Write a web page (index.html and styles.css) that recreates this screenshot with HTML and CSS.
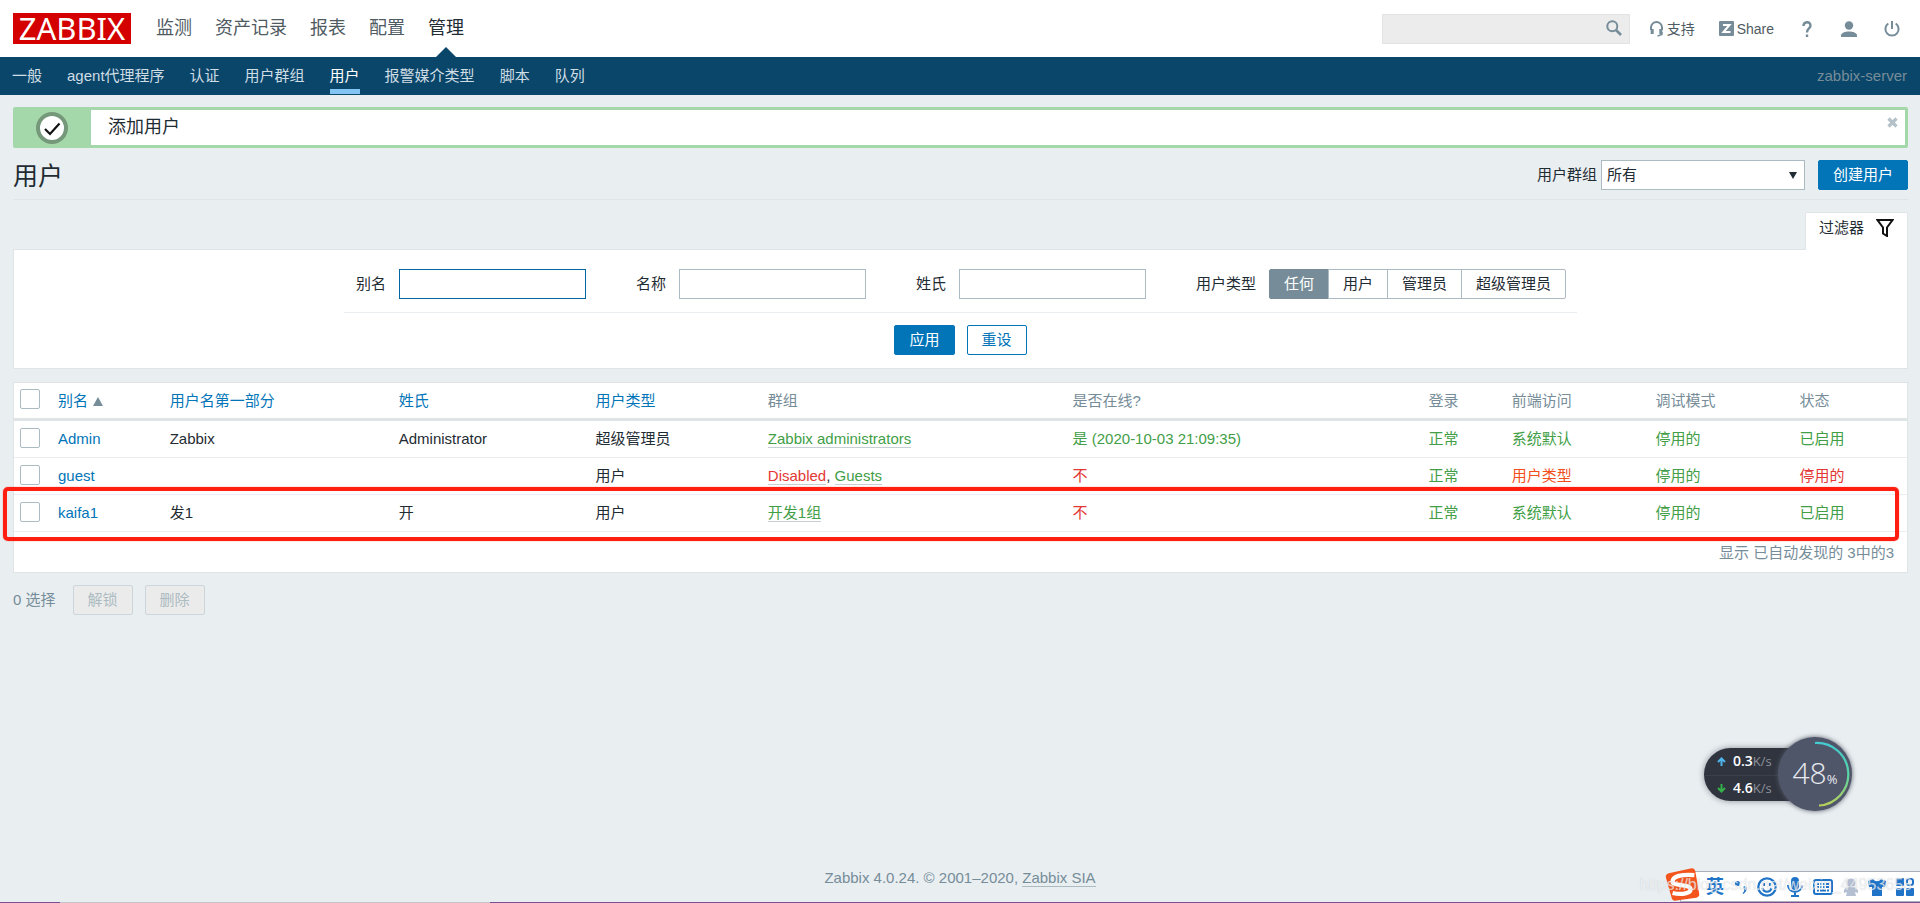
FILE: index.html
```html
<!DOCTYPE html>
<html lang="zh-CN">
<head>
<meta charset="utf-8">
<title>用户</title>
<link rel="stylesheet" href="styles.css">
</head>
<body>
<header class="top">
  <a class="logo" href="#">ZABBIX</a>
  <nav class="main-nav">
    <a href="#">监测</a><a href="#">资产记录</a><a href="#">报表</a><a href="#">配置</a><a class="active" href="#">管理</a>
  </nav>
  <form class="search">
    <input type="text" aria-label="搜索">
    <button type="button" aria-label="搜索"><svg width="16" height="16" viewBox="0 0 16 16" fill="none" stroke="#768d99" stroke-width="2"><circle cx="6.3" cy="6.3" r="5"/><path d="M10 10l5 5" stroke-width="2.6"/></svg></button>
  </form>
  <div class="tools">
    <a class="support" href="#"><svg width="15" height="16" viewBox="0 0 15 16" fill="none" stroke="#768d99" stroke-width="2"><path d="M2 9V6.5a5.5 5.5 0 0 1 11 0V9"/><path d="M3.200 8v5M11.800 8v5" stroke-width="3"/><path d="M13 11v2.500L8.500 15" stroke-width="1.400"/></svg>支持</a>
    <a class="share" href="#"><svg width="15" height="15" viewBox="0 0 15 15"><rect width="15" height="15" rx="1" fill="#768d99"/><path d="M4 4h6.500L4.500 11H11.500" fill="none" stroke="#fff" stroke-width="2"/></svg>Share</a>
    <a class="help" href="#" aria-label="帮助"><svg width="10" height="16" viewBox="0 0 10 16" fill="none" stroke="#768d99" stroke-width="2.400"><path d="M1.500 5C1.500 0 8.500 0 8.500 4.500 8.500 7.500 5 7.500 5 11.500M5 13.500V16"/></svg></a>
    <a class="profile" href="#" aria-label="用户资料"><svg width="16" height="16" viewBox="0 0 16 16" fill="#768d99"><circle cx="8" cy="4.500" r="4.200"/><path d="M0 16v-1.500C0 12 4 10.500 8 10.500s8 1.500 8 4V16z"/></svg></a>
    <a class="signout" href="#" aria-label="退出"><svg width="16" height="16" viewBox="0 0 16 16" fill="none" stroke="#768d99" stroke-width="2"><path d="M4.300 2.500a6.600 6.600 0 1 0 7.400 0M8 0v8"/></svg></a>
  </div>
</header>
<nav class="sub-nav">
  <a href="#">一般</a><a href="#">agent代理程序</a><a href="#">认证</a><a href="#">用户群组</a><a class="active" href="#">用户</a><a href="#">报警媒介类型</a><a href="#">脚本</a><a href="#">队列</a>
  <span class="server">zabbix-server</span>
</nav>
<main>
  <section class="message">
    <div class="message-icon"><svg width="32" height="32" viewBox="0 0 32 32"><circle cx="16" cy="16" r="14" fill="#fff" stroke="#76987a" stroke-width="4"/><path d="M9 17l5 5L23.500 11.500" fill="none" stroke="#111" stroke-width="2.200"/></svg></div>
    <p>添加用户</p>
    <button type="button" aria-label="关闭"><svg width="11" height="11" viewBox="0 0 11 11"><path d="M1.500 1.500l8 8M9.500 1.500l-8 8" stroke="#b5c1c8" stroke-width="3.200"/></svg></button>
  </section>
  <div class="title-row">
    <h1>用户</h1>
    <label for="group">用户群组</label>
    <div class="select-wrap"><select id="group"><option>所有</option></select></div>
    <button type="button" class="btn">创建用户</button>
  </div>
  <div class="tab-row">
    <button type="button" class="filter-tab">过滤器<svg width="18" height="18" viewBox="0 0 18 18" fill="none" stroke="#111" stroke-width="2"><path d="M1.500 1h15L11 8.500V17l-4-2.500v-6z"/></svg></button>
  </div>
  <form class="filter">
    <div class="fields">
      <label for="alias">别名</label><input class="text current" id="alias" type="text">
      <label for="name">名称</label><input class="text" id="name" type="text">
      <label for="surname">姓氏</label><input class="text" id="surname" type="text">
      <span class="type-label" id="type-label">用户类型</span>
      <div class="segments" role="radiogroup" aria-labelledby="type-label">
        <label><input type="radio" name="type" checked>任何</label>
        <label><input type="radio" name="type">用户</label>
        <label><input type="radio" name="type">管理员</label>
        <label><input type="radio" name="type">超级管理员</label>
      </div>
    </div>
    <div class="actions"><button type="button" class="btn">应用</button><button type="button" class="btn alt">重设</button></div>
  </form>
  <div class="list">
    <table>
      <colgroup><col class="c-check"><col class="c-alias"><col class="c-name"><col class="c-surname"><col class="c-type"><col class="c-groups"><col class="c-online"><col class="c-login"><col class="c-front"><col class="c-debug"><col></colgroup>
      <thead>
        <tr><th><input type="checkbox" aria-label="全选"></th><th><a href="#">别名<i class="sort"></i></a></th><th><a href="#">用户名第一部分</a></th><th><a href="#">姓氏</a></th><th><a href="#">用户类型</a></th><th>群组</th><th>是否在线?</th><th>登录</th><th>前端访问</th><th>调试模式</th><th>状态</th></tr>
      </thead>
      <tbody>
        <tr><td><input type="checkbox" aria-label="Admin"></td><td><a href="#">Admin</a></td><td>Zabbix</td><td>Administrator</td><td>超级管理员</td><td><a class="dot green" href="#">Zabbix administrators</a></td><td class="green">是 (2020-10-03 21:09:35)</td><td class="green">正常</td><td class="green">系统默认</td><td class="green">停用的</td><td class="green">已启用</td></tr>
        <tr><td><input type="checkbox" aria-label="guest"></td><td><a href="#">guest</a></td><td></td><td></td><td>用户</td><td><a class="dot red" href="#">Disabled</a>, <a class="dot green" href="#">Guests</a></td><td class="red">不</td><td class="green">正常</td><td class="orange">用户类型</td><td class="green">停用的</td><td class="red">停用的</td></tr>
        <tr><td><input type="checkbox" aria-label="kaifa1"></td><td><a href="#">kaifa1</a></td><td>发1</td><td>开</td><td>用户</td><td><a class="dot green" href="#">开发1组</a></td><td class="red">不</td><td class="green">正常</td><td class="green">系统默认</td><td class="green">停用的</td><td class="green">已启用</td></tr>
      </tbody>
    </table>
    <p class="total">显示 已自动发现的 3中的3</p>
    <div class="highlight"></div>
  </div>
  <div class="bulk"><span>0 选择</span><button type="button" class="btn" disabled>解锁</button><button type="button" class="btn" disabled>删除</button></div>
</main>
<footer>Zabbix 4.0.24. © 2001–2020, <a href="#">Zabbix SIA</a></footer>

<aside class="meter">
  <div class="rates">
    <div><svg width="9" height="9" viewBox="0 0 9 9" fill="none" stroke="#4fb4ec" stroke-width="2"><path d="M4.500 9V1.500M1 5l3.500-3.500L8 5"/></svg><b>0.3</b><span>K/s</span></div>
    <div><svg width="9" height="9" viewBox="0 0 9 9" fill="none" stroke="#35b04a" stroke-width="2"><path d="M4.500 0v7.500M1 4l3.500 3.500L8 4"/></svg><b>4.6</b><span>K/s</span></div>
  </div>
  <div class="dial">
    <svg width="74" height="74" viewBox="0 0 74 74"><defs><linearGradient id="arc" x1="0" y1="0" x2="0" y2="1"><stop offset="0" stop-color="#43cbd0"/><stop offset=".5" stop-color="#57d6a6"/><stop offset="1" stop-color="#b9cf5a"/></linearGradient></defs><path d="M37 6a31 31 0 0 1 4 62.500" fill="none" stroke="url(#arc)" stroke-width="2.200"/></svg>
    <span>48</span><small>%</small>
  </div>
</aside>
<div class="ime">
  <svg class="ime-logo" width="36" height="35" viewBox="0 0 38 36"><path d="M4 6L27 1q4-1 5 3l4 23q1 4-3 5L12 35q-4 1-5-3L1 11q-1-4 3-5z" fill="#f4551c"/><path d="M31 8C18 7 8 9 8 15c0 5 19 2 19 8 0 5-11 6-19 4" fill="none" stroke="#fff" stroke-width="4.500"/></svg>
  <b>英</b>
  <svg width="14" height="14" viewBox="0 0 14 14" fill="#2074c8"><circle cx="3.500" cy="3.500" r="2.600"/><path d="M9.500 6.500c4-1.500 4.500 4 0 7.500l-1-1c1.500-1 2-2.500 1.500-3.500z"/></svg>
  <svg width="20" height="20" viewBox="0 0 20 20" fill="none" stroke="#2074c8" stroke-width="2.200"><circle cx="10" cy="10" r="8.700"/><path d="M5.500 11c1.500 5 7.500 5 9 0M7 6v3M13 6v3"/></svg>
  <svg width="16" height="20" viewBox="0 0 16 20" fill="none" stroke="#2074c8" stroke-width="2"><rect x="5" y="1" width="6" height="11" rx="3" fill="#2074c8"/><path d="M1 8c0 9 14 9 14 0M8 15v4M4 19h8"/></svg>
  <svg width="20" height="16" viewBox="0 0 20 16"><rect x="1" y="1" width="18" height="14" rx="2" fill="#fff" stroke="#2074c8" stroke-width="2"/><path d="M4 5h2m1 0h2m1 0h2m1 0h3M4 8h2m1 0h2m1 0h2m1 0h3M4 11.500h2m1 0h6m1 0h2" stroke="#2074c8" stroke-width="2"/></svg>
  <svg width="16" height="18" viewBox="0 0 16 18" fill="#b4bfd2"><circle cx="8" cy="5" r="4.500"/><path d="M1 15C0 10 4 9 8 9s8 1 7 6l-3-1 1 4H3l1-4z"/></svg>
  <svg width="18" height="18" viewBox="0 0 18 18" fill="#2074c8"><path d="M5 1c2 3 6 3 8 0l5 2-1 6h-3v9H4V9H1L0 3z"/></svg>
  <svg width="18" height="18" viewBox="0 0 18 18" fill="#2074c8"><rect width="8" height="8" rx="1"/><rect y="10" width="8" height="8" rx="1"/><rect x="10" y="10" width="8" height="8" rx="1"/><rect x="11" y="1" width="6" height="6" rx="2" fill="none" stroke="#2074c8" stroke-width="2"/></svg>
</div>
<div class="watermark">https://blog.csdn.net/weixin_44953658</div>
<div class="edge"></div>
</body>
</html>
```
FILE: styles.css
```css
* { box-sizing: border-box; }
body {
  margin: 0;
  min-height: 100vh;
  display: flex;
  flex-direction: column;
  position: relative;
  background: #e9eef1;
  color: #1f2c33;
  font: 15px/18px "Liberation Sans", "Noto Sans CJK SC", sans-serif;
}
button, input, select { font: inherit; color: inherit; margin: 0; }
a { color: #0275b8; text-decoration: none; }
h1, p { margin: 0; font-weight: 400; }
svg { display: block; flex: none; }

.top { display: flex; align-items: center; height: 57px; padding: 0 20px 0 13px; background: #fff; }
.logo {
  width: 118px; height: 31px; margin-right: 25px;
  background: #d40000; color: #fff; text-align: center;
  font: 31px/31px "Noto Sans", sans-serif;
}
.main-nav { display: flex; gap: 23px; height: 57px; font-size: 18px; line-height: 57px; }
.main-nav a { color: #4f5b62; position: relative; }
.main-nav .active { color: #1f2c33; }
.main-nav .active::after {
  content: ""; position: absolute; bottom: 0; left: 8px;
  border: 10px solid transparent; border-top: 0; border-bottom-color: #0a466a;
}
.search { position: relative; margin-left: auto; width: 248px; height: 30px; }
.search input { width: 100%; height: 30px; padding: 0 32px 0 6px; background: #ececec; border: 1px solid #e1e4e5; }
.search button { position: absolute; right: 8px; top: 6px; padding: 0; border: 0; background: none; }
.tools { display: flex; align-items: center; font-size: 14px; }
.tools a { display: flex; align-items: center; gap: 3px; color: #4f5b62; }
.support { margin-left: 19px; }
.share { margin-left: 24px; }
.help { margin-left: 28px; }
.profile { margin-left: 29px; }
.signout { margin-left: 27px; }

.sub-nav { display: flex; gap: 25px; height: 38px; padding: 0 13px 0 12px; background: #0a466a; line-height: 38px; }
.sub-nav a { color: #cfdde4; }
.sub-nav .active { color: #fff; height: 37px; border-bottom: 5px solid #82c5f3; }
.server { margin-left: auto; color: #768d99; }

main { padding: 12px 12px 0 13px; }
.message { display: flex; height: 41px; border: 3px solid #a4d7a9; border-radius: 2px; background: #fff; }
.message-icon { width: 75px; padding: 2px 0 0 20px; background: #a4d7a9; }
.message p { padding-left: 17px; font-size: 18px; line-height: 34px; }
.message button { margin-left: auto; padding: 7px 7px; border: 0; background: none; align-self: flex-start; }
.title-row { display: flex; align-items: center; padding: 12px 0 9px; border-bottom: 1px solid #dfe4e7; }
h1 { margin-right: auto; padding-top: 2px; font-size: 25px; line-height: 28px; }
.select-wrap { position: relative; width: 204px; margin: 0 13px 0 4px; }
.select-wrap::after {
  content: ""; position: absolute; right: 8px; top: 12px; pointer-events: none;
  border: 4px solid transparent; border-top: 7px solid #1f2c33; border-bottom: 0;
}
select { appearance: none; display: block; width: 100%; height: 30px; padding: 0 5px; background: #fff; border: 1px solid #acbbc2; border-radius: 0; }
.btn { height: 30px; padding: 0 14px; background: #0275b8; border: 1px solid #0275b8; border-radius: 2px; color: #fff; }
.btn.alt { background: #fff; color: #0275b8; }
.btn:disabled { background: #ebebeb; border-color: #ccd5d9; color: #acbbc2; }

.tab-row { display: flex; justify-content: flex-end; padding-top: 12px; }
.filter-tab {
  display: flex; align-items: center; gap: 12px; position: relative; z-index: 1;
  height: 38px; margin-bottom: -1px; padding: 0 13px 8px;
  background: #fff; border: 1px solid #dfe4e7; border-bottom: 0; border-radius: 2px 2px 0 0;
}
.filter { display: flex; flex-direction: column; align-items: center; height: 120px; background: #fff; border: 1px solid #dfe4e7; }
.fields { display: flex; align-items: center; padding: 19px 11px 13px 12px; border-bottom: 1px solid #ebeef0; }
.text { width: 187px; height: 30px; margin: 0 50px 0 13px; padding: 0 5px; border: 1px solid #acbbc2; background: #fff; }
.current { border-color: #02659f; }
.type-label { margin-right: 13px; }
.segments { display: flex; }
.segments label { position: relative; height: 30px; margin-left: -1px; padding: 0 14px; border: 1px solid #acbbc2; line-height: 28px; }
.segments label:first-child { margin-left: 0; border-radius: 2px 0 0 2px; }
.segments label:last-child { border-radius: 0 2px 2px 0; }
.segments label:has(:checked) { background: #768d99; border-color: #768d99; color: #fff; }
.segments input { position: absolute; opacity: 0; }
.actions { display: flex; gap: 12px; padding-top: 12px; }

.list { position: relative; margin-top: 13px; background: #fff; border: 1px solid #dfe4e7; }
table { width: 100%; table-layout: fixed; border-collapse: separate; border-spacing: 0; }
th, td { height: 37px; padding: 0 7px; text-align: left; font-weight: 400; border-bottom: 1px solid #ebeef0; white-space: nowrap; }
th { height: 38px; color: #768d99; border-bottom: 3px solid #dfe4e7; }
th:first-child, td:first-child { padding: 0 6px 3px; }
.c-check { width: 37px; }
.c-alias { width: 5.9%; }
.c-name { width: 12.1%; }
.c-surname { width: 10.4%; }
.c-type { width: 9.1%; }
.c-groups { width: 16.1%; }
.c-online { width: 18.8%; }
.c-login { width: 4.4%; }
.c-front, .c-debug { width: 7.6%; }
input[type="checkbox"] { appearance: none; display: block; width: 20px; height: 20px; border: 1px solid #acbbc2; border-radius: 2px; background: #fff; }
.sort { display: inline-block; margin-left: 5px; border: 5px solid transparent; border-top: 0; border-bottom: 9px solid #768d99; }
.dot { border-bottom: 1px solid #c5cfd4; }
.green { color: #429e47; }
.red { color: #e33734; }
.orange { color: #f24f1d; }
.total { padding: 12px 13px 10px; color: #768d99; text-align: right; }
.highlight { position: absolute; left: -11px; right: 8px; top: 104px; height: 54px; border: 4px solid #ff1e10; border-radius: 5px; box-shadow: 0 0 1px #ff1e10; }
.bulk { display: flex; align-items: center; gap: 12px; margin-top: 12px; color: #768d99; }
.bulk span { margin-right: 5px; }
footer { margin-top: auto; padding-bottom: 16px; text-align: center; color: #768d99; }
footer a { color: #768d99; border-bottom: 1px solid #acbbc2; }

.meter { position: absolute; right: 68px; bottom: 92px; width: 148px; height: 74px; }
.rates {
  position: absolute; left: 0; top: 11px; width: 110px; height: 53px;
  display: grid; grid-template-rows: 1fr 1fr;
  border-radius: 27px 0 0 27px; background: #2f343f; box-shadow: 0 0 6px #8a8f98;
  font-family: "Open Sans", sans-serif; font-size: 14px;
}
.rates div { display: flex; align-items: center; padding-left: 13px; }
.rates div + div { border-top: 1px solid #3a404c; }
.rates b { margin-left: 7px; color: #fff; font-weight: 600; }
.rates span { color: #8d929c; font-size: 13px; }
.dial {
  position: absolute; right: 0; top: 0; width: 74px; height: 74px;
  display: flex; align-items: baseline; justify-content: center;
  border-radius: 50%; background: #50566a; box-shadow: 0 0 5px #555a66; color: #e8eaf0;
  font-family: "Open Sans", sans-serif; line-height: 72px;
}
.dial svg { position: absolute; inset: 0; }
.dial span { font-size: 30px; font-weight: 300; }
.dial small { font-size: 13px; }

.ime {
  position: absolute; right: 0; bottom: 1px; width: 240px; height: 31px;
  display: flex; align-items: center; justify-content: space-between;
  padding: 1px 6px 0 25px; background: #fff; border: 1px solid #a9b0ba; border-right: 0;
}
.ime b { color: #2074c8; font-size: 18px; }
.ime-logo { position: absolute; left: -16px; bottom: -1px; }
.watermark { position: absolute; right: 8px; bottom: 8px; color: #ffffffa0; font-size: 16px; line-height: 20px; text-shadow: 0 0 1px #a0a8b080; }
.edge { position: absolute; left: 0; right: 0; bottom: 0; height: 1px; background: linear-gradient(90deg, #7b4f92 60px, #c5c5c8 60px, #c5c5c8 490px, #7b4f92 490px); }
```
